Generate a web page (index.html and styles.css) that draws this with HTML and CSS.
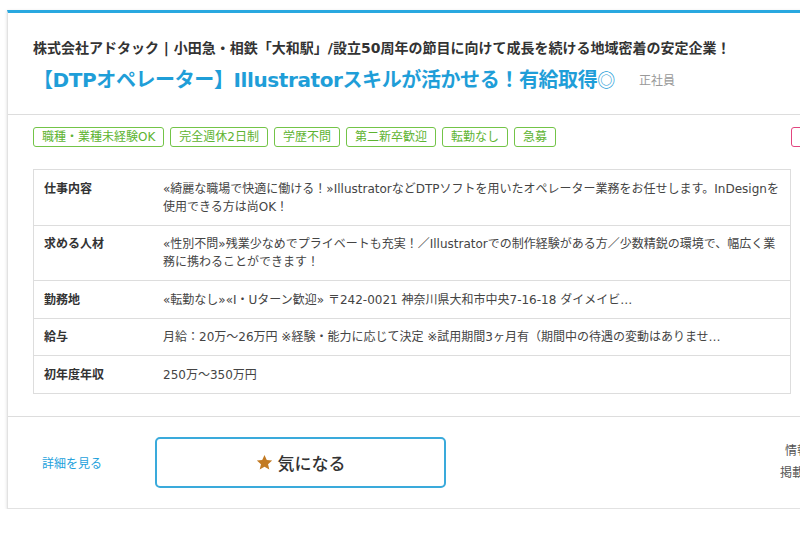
FILE: index.html
```html
<!DOCTYPE html>
<html lang="ja">
<head>
    <meta charset="UTF-8">
    <meta name="viewport" content="width=device-width, initial-scale=1.0">
    <title>求人情報</title>
    <link rel="stylesheet" href="styles.css">
</head>
<body>
    <div class="job-card">
        <div class="job-header">
            <p class="company">株式会社アドタック | 小田急・相鉄「大和駅」/設立50周年の節目に向けて成長を続ける地域密着の安定企業！</p>
            <h2 class="job-title">【DTPオペレーター】Illustratorスキルが活かせる！有給取得<span class="mark">◎</span><span class="employ-type">正社員</span></h2>
        </div>

        <div class="job-body">
            <div class="tag-row">
                <ul class="tags">
                    <li>職種・業種未経験OK</li>
                    <li>完全週休2日制</li>
                    <li>学歴不問</li>
                    <li>第二新卒歓迎</li>
                    <li>転勤なし</li>
                    <li>急募</li>
                </ul>
                <span class="tag-new">NEW</span>
            </div>

            <table class="job-table">
                <tr>
                    <th>仕事内容</th>
                    <td>«綺麗な職場で快適に働ける！»IllustratorなどDTPソフトを用いたオペレーター業務をお任せします。InDesignを使用できる方は尚OK！</td>
                </tr>
                <tr>
                    <th>求める人材</th>
                    <td>«性別不問»残業少なめでプライベートも充実！／Illustratorでの制作経験がある方／少数精鋭の環境で、幅広く業務に携わることができます！</td>
                </tr>
                <tr>
                    <th>勤務地</th>
                    <td>«転勤なし»«I・Uターン歓迎» 〒242-0021 神奈川県大和市中央7-16-18 ダイメイビ…</td>
                </tr>
                <tr>
                    <th>給与</th>
                    <td>月給：20万～26万円 ※経験・能力に応じて決定 ※試用期間3ヶ月有（期間中の待遇の変動はありませ…</td>
                </tr>
                <tr>
                    <th>初年度年収</th>
                    <td>250万～350万円</td>
                </tr>
            </table>
        </div>

        <div class="job-footer">
            <a class="detail-link" href="#">詳細を見る</a>
            <button class="keep-btn">
                <svg class="star" width="17" height="17" viewBox="0 0 24 24"><path d="M12 1.5l3.2 7.1 7.6.7-5.8 5 1.8 7.6L12 17.9l-6.8 4 1.8-7.6-5.8-5 7.6-.7z" fill="#c27a23"/></svg>
                気になる
            </button>
            <div class="dates">
                <p class="date-first">情報更新日：2024/05/20</p>
                <p>掲載期間：2024/05/20～2024/06/16</p>
            </div>
        </div>
    </div>
</body>
</html>
```

FILE: styles.css
```css
html, body {
    margin: 0;
    overflow: hidden;
}
body {
    font-family: "DejaVu Sans", "Noto Sans CJK JP", sans-serif;
    color: #333;
    background-color: #fff;
    padding: 10px 0 0 7px;
}
.job-card {
    width: 1000px;
    border: 1px solid #e2e2e2;
    border-top: 3px solid #29a8e0;
    box-shadow: 0 1px 3px rgba(0, 0, 0, 0.15);
    background-color: #fff;
}
.job-header {
    padding: 24px 25px 20px;
    border-bottom: 1px solid #ddd;
}
.company {
    margin: 0;
    font-size: 14px;
    line-height: 22px;
    font-weight: bold;
    color: #333;
}
.job-title {
    margin: 6px 0 0;
    font-size: 20px;
    line-height: 28px;
    font-weight: bold;
    color: #1f9ed8;
    letter-spacing: -0.4px;
}
.mark {
    font-family: "Noto Sans CJK JP", sans-serif;
    font-size: 18px;
    font-weight: normal;
}
.employ-type {
    margin-left: 24px;
    font-family: "Noto Sans CJK JP", sans-serif;
    font-size: 12px;
    font-weight: normal;
    color: #999;
    letter-spacing: 0;
    vertical-align: 2px;
}
.job-body {
    padding: 12px 25px 22px;
    border-bottom: 1px solid #ddd;
}
.tag-row {
    display: flex;
    width: 820px;
    margin-bottom: 22px;
}
.tags {
    display: flex;
    gap: 6px;
    margin: 0;
    padding: 0;
    list-style: none;
}
.tags li {
    border: 1.5px solid #73c447;
    border-radius: 3px;
    padding: 0 8px;
    font-size: 12px;
    line-height: 18px;
    color: #5db330;
}
.tag-new {
    margin-left: auto;
    width: 60px;
    border: 1.5px solid #e2457f;
    border-radius: 3px;
    font-size: 12px;
    line-height: 18px;
    color: #e2457f;
    text-align: center;
}
.job-table {
    width: 758px;
    border-collapse: collapse;
    border: 1px solid #ddd;
    font-size: 12px;
    line-height: 18px;
}
.job-table th,
.job-table td {
    padding: 9.5px 10px 9px;
    border-bottom: 1px solid #ddd;
    text-align: left;
    vertical-align: top;
}
.job-table th {
    width: 99px;
    font-weight: bold;
    color: #333;
}
.job-table td {
    color: #444;
}
.job-footer {
    display: flex;
    align-items: center;
    padding: 20px 0 20px 34px;
}
.detail-link {
    width: 113px;
    font-size: 12px;
    color: #24a1dc;
    text-decoration: none;
}
.keep-btn {
    display: flex;
    align-items: center;
    justify-content: center;
    gap: 5px;
    width: 291px;
    height: 51px;
    border: 2px solid #3aaadb;
    border-radius: 5px;
    background-color: #fff;
    font-family: inherit;
    font-size: 17px;
    font-weight: 500;
    color: #333;
    cursor: pointer;
}
.dates {
    margin-left: 334px;
    font-size: 12px;
    line-height: 22px;
    color: #555;
}
.dates p {
    margin: 0;
}
.date-first {
    padding-left: 5px;
}
```
